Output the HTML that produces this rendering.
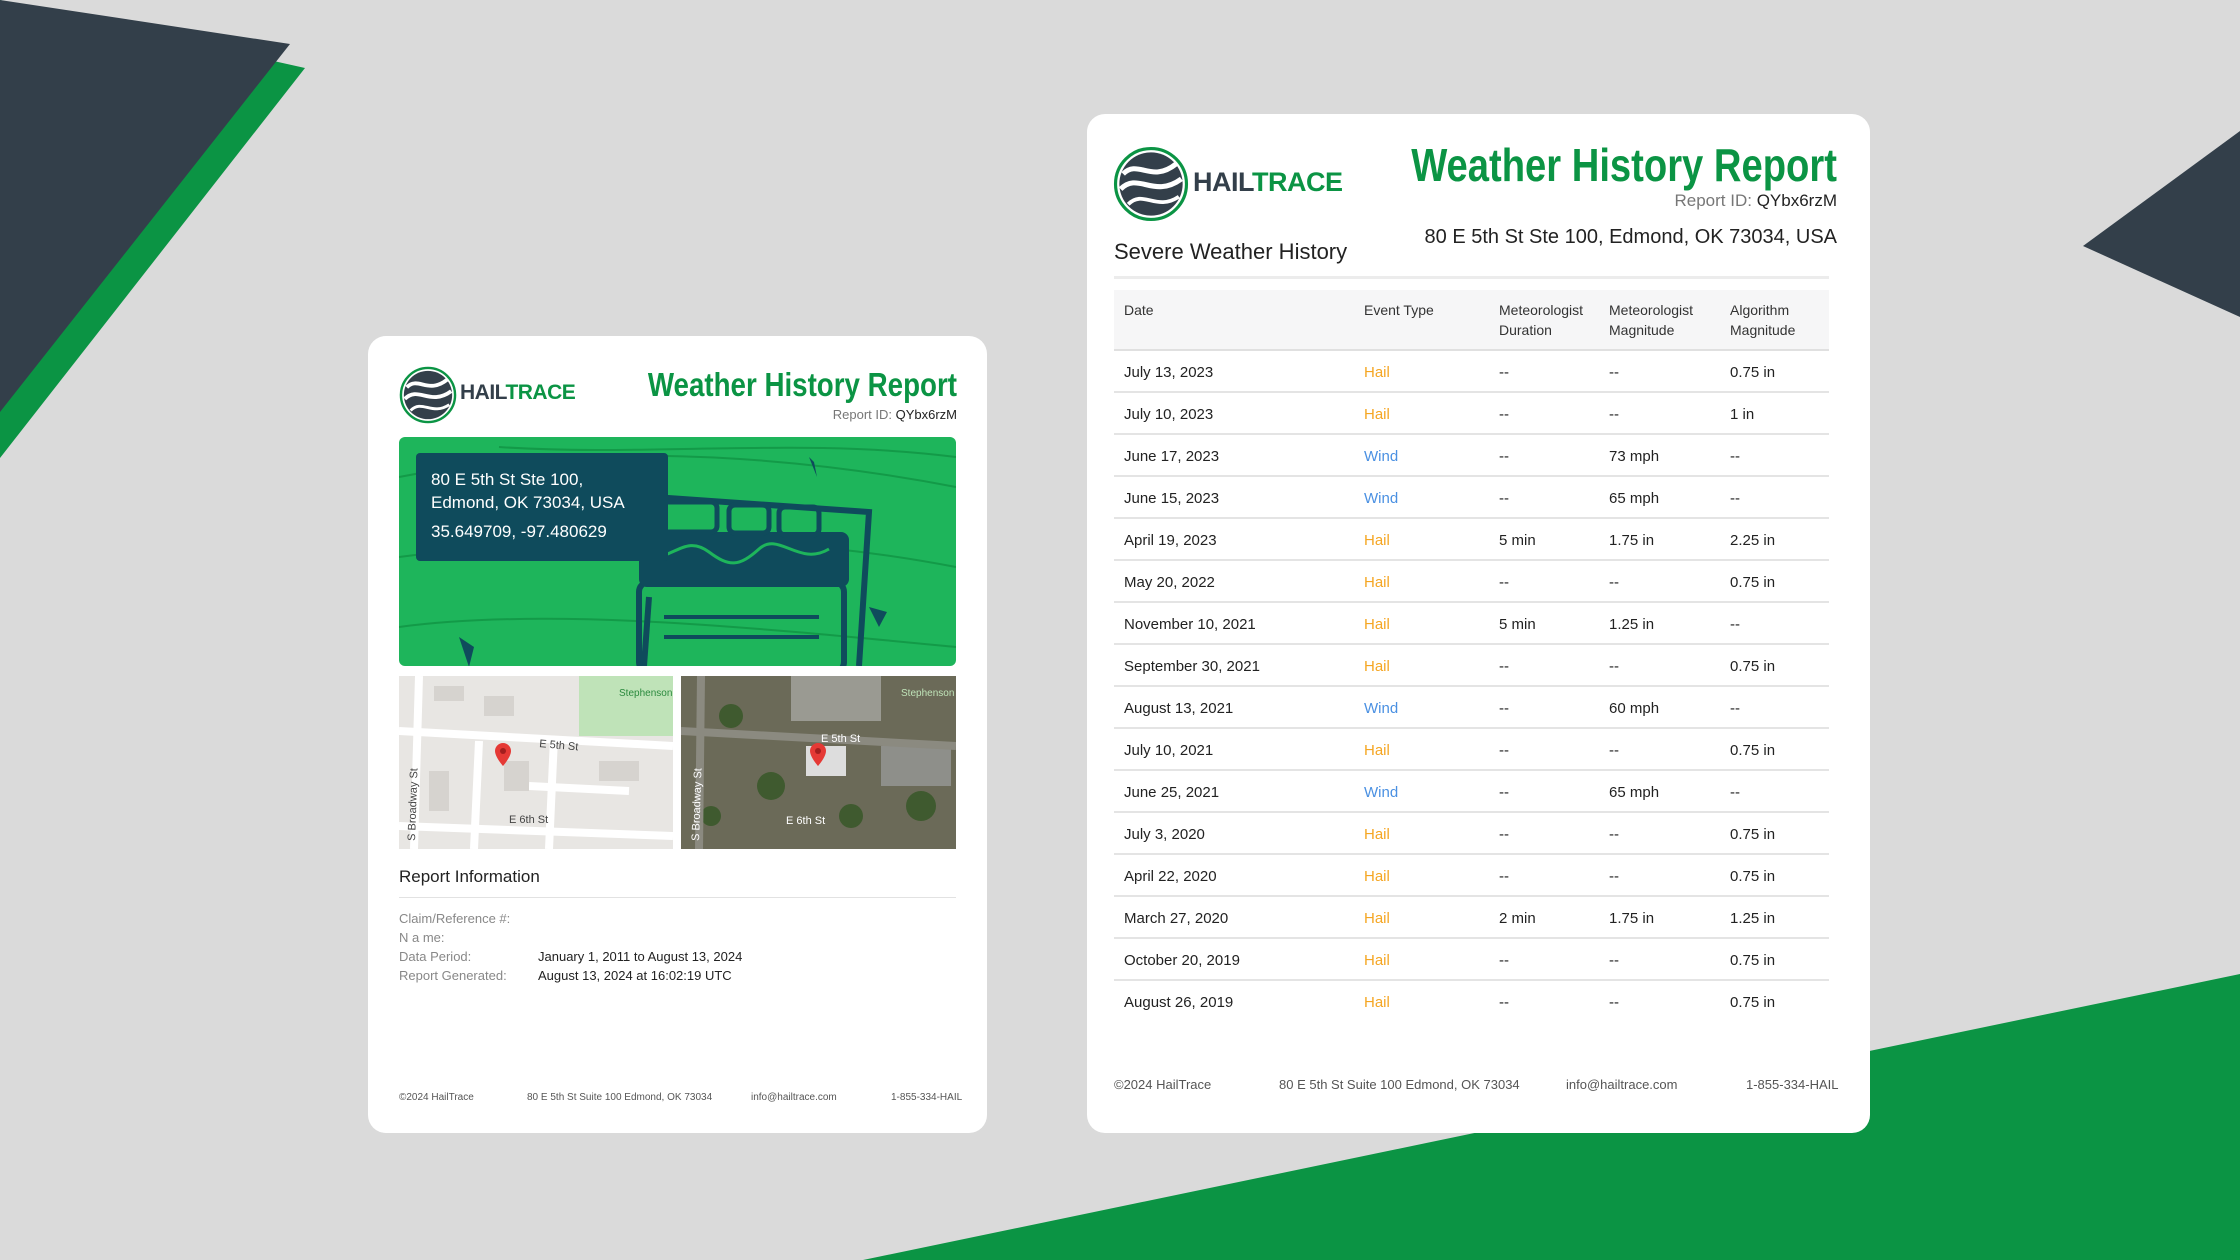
<!DOCTYPE html>
<html><head><meta charset="utf-8"><style>
*{margin:0;padding:0;box-sizing:border-box}
body{width:2240px;height:1260px;background:#dadada;position:relative;overflow:hidden;font-family:"Liberation Sans",sans-serif;color:#222}
.abs{position:absolute;white-space:nowrap}
.card{position:absolute;background:#fff;border-radius:18px}
.title{color:#0b9444;font-weight:bold;transform-origin:right center;display:inline-block}
.row{position:absolute;left:1114px;width:715px;height:42px;border-bottom:2px solid #e4e4e4;font-size:15px;color:#222}
.row span{position:absolute;top:13px}
.h{color:#f5a623}.w{color:#4a90e2}
</style></head><body>
<svg class="abs" style="left:0;top:0" width="2240" height="1260">
<polygon points="0,0 305,68 0,458" fill="#0b9444"/>
<polygon points="0,0 290,44 0,412" fill="#333f4a"/>
<polygon points="2240,131 2083,246 2240,317" fill="#333f4a"/>
<polygon points="863,1260 2240,974 2240,1260" fill="#0b9444"/>
</svg>

<!-- LEFT CARD -->
<div class="card" style="left:368px;top:336px;width:619px;height:797px"></div>
<svg class="abs" style="left:399px;top:366px" width="58" height="58" viewBox="0 0 60 60">
<circle cx="30" cy="30" r="28" fill="#fff" stroke="#0b9444" stroke-width="2.5"/>
<circle cx="30" cy="30" r="25" fill="#333f4a"/>
<path d="M8 22 C20 10 30 30 50 14" stroke="#fff" stroke-width="4" fill="none"/>
<path d="M6 34 C20 20 32 42 54 26" stroke="#fff" stroke-width="4" fill="none"/>
<path d="M12 46 C24 34 34 52 52 40" stroke="#fff" stroke-width="3" fill="none"/>
</svg>
<div class="abs" style="left:460px;top:381px;font-size:21px;font-weight:bold;color:#333f4a;letter-spacing:-0.5px">HAIL<span style="color:#0b9444">TRACE</span></div>
<div class="abs" style="right:1283px;top:366px"><span class="title" style="font-size:33px;transform:scaleX(0.84)">Weather History Report</span></div>
<div class="abs" style="right:1283px;top:407px;font-size:13px;color:#777">Report ID: <span style="color:#222">QYbx6rzM</span></div>

<svg class="abs" style="left:399px;top:437px;border-radius:6px" width="557" height="229" viewBox="0 0 557 229">
<rect width="557" height="229" fill="#1eb55b"/>
<g stroke="#139a48" stroke-width="2" fill="none">
<path d="M0 40 C150 10 350 10 557 50"/><path d="M0 120 C150 100 350 90 557 130"/><path d="M0 190 C150 170 350 190 557 210"/><path d="M100 10 C250 20 400 0 557 20"/>
</g>
<g fill="none" stroke="#0f4b5c" stroke-width="6">
<path d="M255 60 L470 75 L460 229"/><path d="M250 160 L245 229"/>
<rect x="240" y="145" width="205" height="90" rx="10"/>
</g>
<rect x="240" y="95" width="210" height="55" rx="8" fill="#0f4b5c"/>
<path d="M255 122 C280 115 290 100 310 115 S340 130 360 112 S400 130 430 112" stroke="#1eb55b" stroke-width="3" fill="none"/>
<g fill="none" stroke="#0f4b5c" stroke-width="5"><rect x="248" y="65" width="70" height="30" rx="6"/><rect x="330" y="68" width="40" height="28" rx="6"/><rect x="380" y="70" width="40" height="28" rx="6"/></g>
<g stroke="#0f4b5c" stroke-width="4"><path d="M265 180 H420"/><path d="M265 200 H420" /></g>
<path d="M60 200 L70 230 L75 210 Z M470 170 L480 190 L488 175 Z M410 20 L418 40 L415 25Z" fill="#0f4b5c"/>
</svg>
<div class="abs" style="left:416px;top:453px;width:252px;height:108px;background:#0f4b5c;border-radius:4px"></div>
<div class="abs" style="left:431px;top:468px;font-size:17px;color:#fff;line-height:23px">80 E 5th St Ste 100,<br>Edmond, OK 73034, USA</div>
<div class="abs" style="left:431px;top:522px;font-size:17px;color:#fff">35.649709, -97.480629</div>

<svg class="abs" style="left:399px;top:676px" width="274" height="173">
<rect width="274" height="173" fill="#e8e6e3"/>
<rect x="180" y="0" width="94" height="60" fill="#bfe3b8"/>
<g stroke="#fff" stroke-width="8" fill="none"><path d="M0 55 L274 70"/><path d="M80 65 L75 173"/><path d="M155 62 L150 173"/><path d="M0 150 L274 160"/><path d="M130 110 L230 115"/><path d="M20 0 L15 173"/></g>
<g fill="#d6d3cf"><rect x="35" y="10" width="30" height="15"/><rect x="85" y="20" width="30" height="20"/><rect x="105" y="85" width="25" height="30"/><rect x="200" y="85" width="40" height="20"/><rect x="30" y="95" width="20" height="40"/></g>
<text x="140" y="71" font-size="11" fill="#444" transform="rotate(5 140 71)">E 5th St</text>
<text x="110" y="147" font-size="11" fill="#444">E 6th St</text>
<text x="16" y="165" font-size="11" fill="#444" transform="rotate(-88 16 165)">S Broadway St</text>
<text x="220" y="20" font-size="10" fill="#2b8a3e">Stephenson</text>
<path d="M96 75 a8 8 0 0 1 16 0 c0 6 -8 15 -8 15 c0 0 -8 -9 -8 -15z" fill="#e53935"/><circle cx="104" cy="75" r="3" fill="#a31e1e"/>
</svg>
<svg class="abs" style="left:681px;top:676px" width="275" height="173">
<rect width="275" height="173" fill="#6b6a58"/>
<rect x="110" y="0" width="90" height="45" fill="#9a9a92"/><rect x="200" y="70" width="70" height="40" fill="#8e8f8a"/>
<g fill="#3f5a2f"><circle cx="50" cy="40" r="12"/><circle cx="90" cy="110" r="14"/><circle cx="170" cy="140" r="12"/><circle cx="240" cy="130" r="15"/><circle cx="30" cy="140" r="10"/></g>
<g stroke="#8b8a80" stroke-width="8" fill="none"><path d="M0 55 L275 70"/><path d="M20 0 L18 173"/></g>
<rect x="125" y="70" width="40" height="30" fill="#ddd"/>
<text x="140" y="66" font-size="11" fill="#fff">E 5th St</text><text x="105" y="148" font-size="11" fill="#fff">E 6th St</text>
<text x="18" y="165" font-size="11" fill="#fff" transform="rotate(-88 18 165)">S Broadway St</text>
<text x="220" y="20" font-size="10" fill="#bfe3b8">Stephenson</text>
<path d="M129 75 a8 8 0 0 1 16 0 c0 6 -8 15 -8 15 c0 0 -8 -9 -8 -15z" fill="#e53935"/><circle cx="137" cy="75" r="3" fill="#a31e1e"/>
</svg>

<div class="abs" style="left:399px;top:867px;font-size:17px;color:#222">Report Information</div>
<div class="abs" style="left:399px;top:897px;width:557px;height:1px;background:#e2e2e2"></div>
<div class="abs" style="left:399px;top:909px;font-size:13px;color:#888;line-height:19px">Claim/Reference #:<br>N a me:<br>Data Period:<br>Report Generated:</div>
<div class="abs" style="left:538px;top:947px;font-size:13px;color:#222;line-height:19px">January 1, 2011 to August 13, 2024<br>August 13, 2024 at 16:02:19 UTC</div>
<div class="abs" style="left:399px;top:1092px;font-size:10px;color:#555">©2024 HailTrace</div>
<div class="abs" style="left:527px;top:1092px;font-size:10px;color:#555">80 E 5th St Suite 100 Edmond, OK 73034</div>
<div class="abs" style="left:751px;top:1092px;font-size:10px;color:#555">info@hailtrace.com</div>
<div class="abs" style="left:891px;top:1092px;font-size:10px;color:#555">1-855-334-HAIL</div>

<!-- RIGHT CARD -->
<div class="card" style="left:1087px;top:114px;width:783px;height:1019px"></div>
<svg class="abs" style="left:1113px;top:146px" width="76" height="76" viewBox="0 0 60 60">
<circle cx="30" cy="30" r="28" fill="#fff" stroke="#0b9444" stroke-width="2.5"/>
<circle cx="30" cy="30" r="25" fill="#333f4a"/>
<path d="M8 22 C20 10 30 30 50 14" stroke="#fff" stroke-width="4" fill="none"/>
<path d="M6 34 C20 20 32 42 54 26" stroke="#fff" stroke-width="4" fill="none"/>
<path d="M12 46 C24 34 34 52 52 40" stroke="#fff" stroke-width="3" fill="none"/>
</svg>
<div class="abs" style="left:1193px;top:167px;font-size:27px;font-weight:bold;color:#333f4a;letter-spacing:-0.5px">HAIL<span style="color:#0b9444">TRACE</span></div>
<div class="abs" style="right:403px;top:138px"><span class="title" style="font-size:46px;transform:scaleX(0.83)">Weather History Report</span></div>
<div class="abs" style="right:403px;top:191px;font-size:17px;color:#777">Report ID: <span style="color:#222">QYbx6rzM</span></div>
<div class="abs" style="right:403px;top:226px;font-size:20px;color:#222">80 E 5th St Ste 100, Edmond, OK 73034, USA</div>
<div class="abs" style="left:1114px;top:239px;font-size:22px;color:#222">Severe Weather History</div>
<div class="abs" style="left:1114px;top:276px;width:715px;height:3px;background:#ececec"></div>
<div class="abs" style="left:1114px;top:290px;width:715px;height:61px;background:#f6f6f7;border-bottom:2px solid #e0e0e0"></div>
<div class="abs" style="left:1124px;top:300px;font-size:14px;color:#333;line-height:20px">Date</div>
<div class="abs" style="left:1364px;top:300px;font-size:14px;color:#333;line-height:20px">Event Type</div>
<div class="abs" style="left:1499px;top:300px;font-size:14px;color:#333;line-height:20px">Meteorologist<br>Duration</div>
<div class="abs" style="left:1609px;top:300px;font-size:14px;color:#333;line-height:20px">Meteorologist<br>Magnitude</div>
<div class="abs" style="left:1730px;top:300px;font-size:14px;color:#333;line-height:20px">Algorithm<br>Magnitude</div>

<div class="row" style="top:351px"><span style="left:10px">July 13, 2023</span><span class="h" style="left:250px">Hail</span><span style="left:385px">--</span><span style="left:495px">--</span><span style="left:616px">0.75 in</span></div>
<div class="row" style="top:393px"><span style="left:10px">July 10, 2023</span><span class="h" style="left:250px">Hail</span><span style="left:385px">--</span><span style="left:495px">--</span><span style="left:616px">1 in</span></div>
<div class="row" style="top:435px"><span style="left:10px">June 17, 2023</span><span class="w" style="left:250px">Wind</span><span style="left:385px">--</span><span style="left:495px">73 mph</span><span style="left:616px">--</span></div>
<div class="row" style="top:477px"><span style="left:10px">June 15, 2023</span><span class="w" style="left:250px">Wind</span><span style="left:385px">--</span><span style="left:495px">65 mph</span><span style="left:616px">--</span></div>
<div class="row" style="top:519px"><span style="left:10px">April 19, 2023</span><span class="h" style="left:250px">Hail</span><span style="left:385px">5 min</span><span style="left:495px">1.75 in</span><span style="left:616px">2.25 in</span></div>
<div class="row" style="top:561px"><span style="left:10px">May 20, 2022</span><span class="h" style="left:250px">Hail</span><span style="left:385px">--</span><span style="left:495px">--</span><span style="left:616px">0.75 in</span></div>
<div class="row" style="top:603px"><span style="left:10px">November 10, 2021</span><span class="h" style="left:250px">Hail</span><span style="left:385px">5 min</span><span style="left:495px">1.25 in</span><span style="left:616px">--</span></div>
<div class="row" style="top:645px"><span style="left:10px">September 30, 2021</span><span class="h" style="left:250px">Hail</span><span style="left:385px">--</span><span style="left:495px">--</span><span style="left:616px">0.75 in</span></div>
<div class="row" style="top:687px"><span style="left:10px">August 13, 2021</span><span class="w" style="left:250px">Wind</span><span style="left:385px">--</span><span style="left:495px">60 mph</span><span style="left:616px">--</span></div>
<div class="row" style="top:729px"><span style="left:10px">July 10, 2021</span><span class="h" style="left:250px">Hail</span><span style="left:385px">--</span><span style="left:495px">--</span><span style="left:616px">0.75 in</span></div>
<div class="row" style="top:771px"><span style="left:10px">June 25, 2021</span><span class="w" style="left:250px">Wind</span><span style="left:385px">--</span><span style="left:495px">65 mph</span><span style="left:616px">--</span></div>
<div class="row" style="top:813px"><span style="left:10px">July 3, 2020</span><span class="h" style="left:250px">Hail</span><span style="left:385px">--</span><span style="left:495px">--</span><span style="left:616px">0.75 in</span></div>
<div class="row" style="top:855px"><span style="left:10px">April 22, 2020</span><span class="h" style="left:250px">Hail</span><span style="left:385px">--</span><span style="left:495px">--</span><span style="left:616px">0.75 in</span></div>
<div class="row" style="top:897px"><span style="left:10px">March 27, 2020</span><span class="h" style="left:250px">Hail</span><span style="left:385px">2 min</span><span style="left:495px">1.75 in</span><span style="left:616px">1.25 in</span></div>
<div class="row" style="top:939px"><span style="left:10px">October 20, 2019</span><span class="h" style="left:250px">Hail</span><span style="left:385px">--</span><span style="left:495px">--</span><span style="left:616px">0.75 in</span></div>
<div class="row" style="top:981px;border-bottom:none"><span style="left:10px">August 26, 2019</span><span class="h" style="left:250px">Hail</span><span style="left:385px">--</span><span style="left:495px">--</span><span style="left:616px">0.75 in</span></div>

<div class="abs" style="left:1114px;top:1077px;font-size:13px;color:#555">©2024 HailTrace</div>
<div class="abs" style="left:1279px;top:1077px;font-size:13px;color:#555">80 E 5th St Suite 100 Edmond, OK 73034</div>
<div class="abs" style="left:1566px;top:1077px;font-size:13px;color:#555">info@hailtrace.com</div>
<div class="abs" style="left:1746px;top:1077px;font-size:13px;color:#555">1-855-334-HAIL</div>
</body></html>
